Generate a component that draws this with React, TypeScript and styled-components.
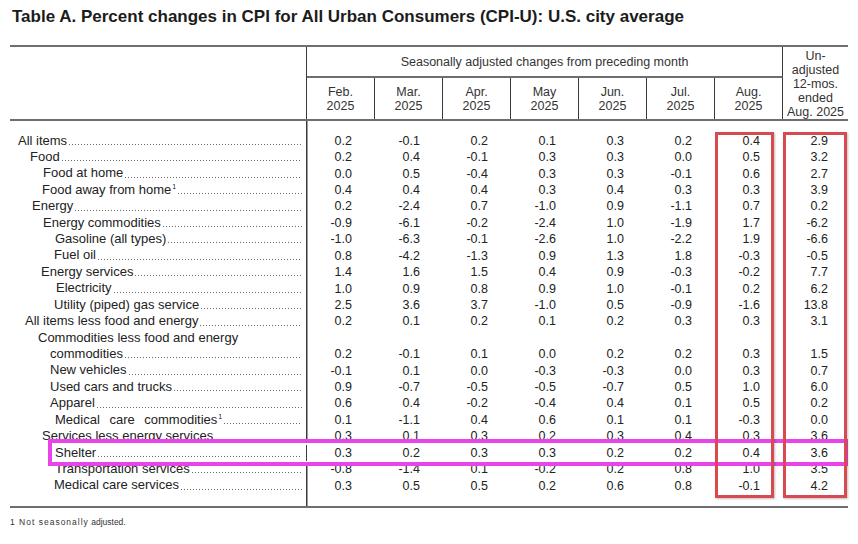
import React from "react";
import styled, { createGlobalStyle, css } from "styled-components";

const Global = createGlobalStyle`
  html, body { margin: 0; padding: 0; background: #fff; }
  body { font-family: "Liberation Sans", Arial, sans-serif; color: #222; }
`;

const COLS = "297px repeat(7, 68px) 65px";
const RULE = "#6e6e6e";
const VRULE = "#3a3a3a";

const Page = styled.div`
  width: 858px;
  height: 544px;
  box-sizing: border-box;
  padding: 7px 10px 0 10px;
  display: flex;
  flex-direction: column;
`;

const Title = styled.h1`
  margin: 0;
  padding-left: 2px;
  font-size: 17px;
  line-height: 20px;
  font-weight: bold;
  color: #1c1c1c;
`;

const Table = styled.div`
  margin-top: 18px;
  width: 838px;
  border-top: 2px solid ${RULE};
  border-bottom: 2px solid ${RULE};
`;

const Head = styled.div`
  display: grid;
  grid-template-columns: ${COLS};
  grid-template-rows: 31px 41px;
  border-bottom: 2px solid ${RULE};
  font-size: 12.5px;
  line-height: 14px;
  color: #333;
`;

const Stub = styled.div`
  grid-column: 1;
  grid-row: 1 / span 2;
  border-right: 1.5px solid ${VRULE};
`;

const Spanner = styled.div`
  grid-column: 2 / span 7;
  grid-row: 1;
  box-sizing: border-box;
  border-bottom: 2px solid ${RULE};
  border-right: 1.5px solid ${VRULE};
  display: flex;
  align-items: center;
  justify-content: center;
`;

const MonthHead = styled.div`
  grid-row: 2;
  border-right: 1.5px solid ${VRULE};
  display: flex;
  flex-direction: column;
  align-items: center;
  justify-content: center;
  text-align: center;
`;

const YearHead = styled.div`
  grid-column: 9;
  grid-row: 1 / span 2;
  padding-top: 2px;
  display: flex;
  flex-direction: column;
  align-items: center;
  justify-content: center;
  text-align: center;
`;

const Body = styled.div`
  position: relative;
  isolation: isolate;
  padding: 11.5px 0 12.5px;
  background: linear-gradient(${VRULE}, ${VRULE}) 295.5px 0 / 1.5px 100% no-repeat;
`;

const Row = styled.div<{ $hl?: boolean }>`
  display: grid;
  grid-template-columns: ${COLS};
  height: 16.43px;
  align-items: center;
  color: #222;
  ${(p) =>
    p.$hl &&
    css`
      position: relative;
      z-index: 1;
      &::before {
        content: "";
        position: absolute;
        left: 38px;
        right: 0;
        top: -5.5px;
        bottom: -5px;
        background: #fff;
        border: 4px solid #e844e8;
        z-index: -1;
      }
    `}
`;

const Label = styled.div<{ $indent: number; $ws?: number }>`
  display: flex;
  align-items: baseline;
  align-self: stretch;
  box-sizing: border-box;
  padding-left: ${(p) => p.$indent}px;
  padding-right: 4px;
  border-right: 1.5px solid ${VRULE};
  font-size: 13px;
  line-height: 16.43px;
  white-space: nowrap;
  word-spacing: ${(p) => p.$ws ?? 0}px;
`;

const Leader = styled.span`
  flex: 1;
  align-self: stretch;
  margin-left: 2px;
  background-image: linear-gradient(to right, #6a6a6a 1px, transparent 1px);
  background-size: 3px 1px;
  background-repeat: repeat-x;
  background-position: left bottom 4px;
`;

const Sup = styled.sup`
  font-size: 7px;
  line-height: 0;
  vertical-align: 5px;
  margin-left: 1px;
`;

const Num = styled.div<{ $last?: boolean }>`
  text-align: right;
  padding-right: ${(p) => (p.$last ? 20 : 23)}px;
  font-size: 12.5px;
`;

const Callout = styled.div<{ $left: number; $width: number }>`
  position: absolute;
  z-index: 2;
  top: 10.5px;
  bottom: 8px;
  left: ${(p) => p.$left}px;
  width: ${(p) => p.$width}px;
  box-sizing: border-box;
  border: 3px solid #d84a50;
  box-shadow: 1px 1px 2px rgba(0, 0, 0, 0.25);
  pointer-events: none;
`;

const Footnote = styled.div`
  margin-top: 9px;
  font-size: 8.5px;
  line-height: 10px;
  color: #333;
`;

const Spaced = styled.span`
  letter-spacing: 1px;
`;

type Item = {
  label: string;
  indent: number;
  values?: string[];
  sup?: boolean;
  ws?: number;
  hl?: boolean;
};

const rows: Item[] = [
  { label: "All items", indent: 8, values: ["0.2", "-0.1", "0.2", "0.1", "0.3", "0.2", "0.4", "2.9"] },
  { label: "Food", indent: 20, values: ["0.2", "0.4", "-0.1", "0.3", "0.3", "0.0", "0.5", "3.2"] },
  { label: "Food at home", indent: 33, values: ["0.0", "0.5", "-0.4", "0.3", "0.3", "-0.1", "0.6", "2.7"] },
  { label: "Food away from home", indent: 32, sup: true, values: ["0.4", "0.4", "0.4", "0.3", "0.4", "0.3", "0.3", "3.9"] },
  { label: "Energy", indent: 22, values: ["0.2", "-2.4", "0.7", "-1.0", "0.9", "-1.1", "0.7", "0.2"] },
  { label: "Energy commodities", indent: 33, values: ["-0.9", "-6.1", "-0.2", "-2.4", "1.0", "-1.9", "1.7", "-6.2"] },
  { label: "Gasoline (all types)", indent: 45, values: ["-1.0", "-6.3", "-0.1", "-2.6", "1.0", "-2.2", "1.9", "-6.6"] },
  { label: "Fuel oil", indent: 44, values: ["0.8", "-4.2", "-1.3", "0.9", "1.3", "1.8", "-0.3", "-0.5"] },
  { label: "Energy services", indent: 31, values: ["1.4", "1.6", "1.5", "0.4", "0.9", "-0.3", "-0.2", "7.7"] },
  { label: "Electricity", indent: 46, values: ["1.0", "0.9", "0.8", "0.9", "1.0", "-0.1", "0.2", "6.2"] },
  { label: "Utility (piped) gas service", indent: 44, values: ["2.5", "3.6", "3.7", "-1.0", "0.5", "-0.9", "-1.6", "13.8"] },
  { label: "All items less food and energy", indent: 15, values: ["0.2", "0.1", "0.2", "0.1", "0.2", "0.3", "0.3", "3.1"] },
  { label: "Commodities less food and energy", indent: 28 },
  { label: "commodities", indent: 40, values: ["0.2", "-0.1", "0.1", "0.0", "0.2", "0.2", "0.3", "1.5"] },
  { label: "New vehicles", indent: 40, values: ["-0.1", "0.1", "0.0", "-0.3", "-0.3", "0.0", "0.3", "0.7"] },
  { label: "Used cars and trucks", indent: 40, values: ["0.9", "-0.7", "-0.5", "-0.5", "-0.7", "0.5", "1.0", "6.0"] },
  { label: "Apparel", indent: 40, values: ["0.6", "0.4", "-0.2", "-0.4", "0.4", "0.1", "0.5", "0.2"] },
  { label: "Medical care commodities", indent: 45, sup: true, ws: 6, values: ["0.1", "-1.1", "0.4", "0.6", "0.1", "0.1", "-0.3", "0.0"] },
  { label: "Services less energy services", indent: 32, values: ["0.3", "0.1", "0.3", "0.2", "0.3", "0.4", "0.3", "3.6"] },
  { label: "Shelter", indent: 45, hl: true, values: ["0.3", "0.2", "0.3", "0.3", "0.2", "0.2", "0.4", "3.6"] },
  { label: "Transportation services", indent: 45, values: ["-0.8", "-1.4", "0.1", "-0.2", "0.2", "0.8", "1.0", "3.5"] },
  { label: "Medical care services", indent: 44, values: ["0.3", "0.5", "0.5", "0.2", "0.6", "0.8", "-0.1", "4.2"] },
];

const months = ["Feb.", "Mar.", "Apr.", "May", "Jun.", "Jul.", "Aug."];

export default function App() {
  return (
    <>
      <Global />
      <Page>
        <Title>Table A. Percent changes in CPI for All Urban Consumers (CPI-U): U.S. city average</Title>
        <Table>
          <Head>
            <Stub />
            <Spanner>Seasonally adjusted changes from preceding month</Spanner>
            {months.map((m) => (
              <MonthHead key={m}>
                <span>{m}</span>
                <span>2025</span>
              </MonthHead>
            ))}
            <YearHead>
              <span>Un-</span>
              <span>adjusted</span>
              <span>12-mos.</span>
              <span>ended</span>
              <span>Aug. 2025</span>
            </YearHead>
          </Head>
          <Body>
            {rows.map((r) => (
              <Row key={r.label} $hl={r.hl}>
                <Label $indent={r.indent} $ws={r.ws}>
                  <span>
                    {r.label}
                    {r.sup && <Sup>1</Sup>}
                  </span>
                  {r.values && <Leader />}
                </Label>
                {r.values &&
                  r.values.map((v, i) => (
                    <Num key={i} $last={i === 7}>
                      {v}
                    </Num>
                  ))}
              </Row>
            ))}
            <Callout $left={705} $width={59} />
            <Callout $left={773} $width={64} />
          </Body>
        </Table>
        <Footnote>
          <Spaced>1 Not seasonally</Spaced> adjusted.
        </Footnote>
      </Page>
    </>
  );
}
